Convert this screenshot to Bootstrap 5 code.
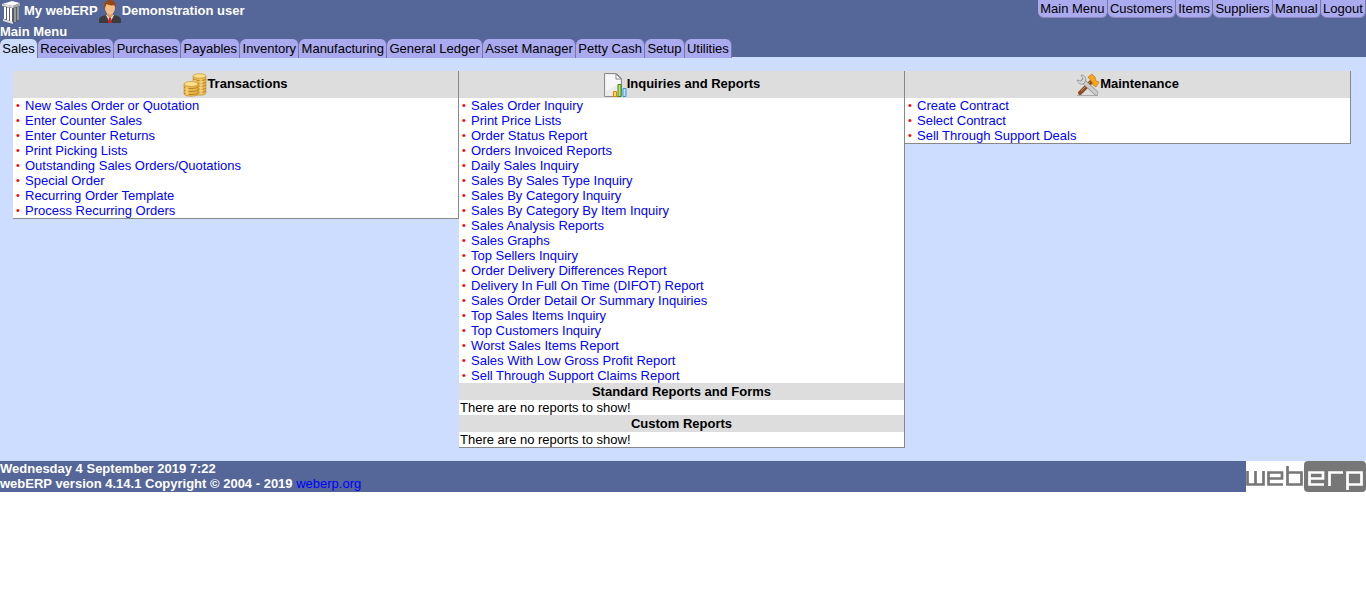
<!DOCTYPE html>
<html lang="en">
<head>
<meta charset="utf-8">
<meta name="viewport" content="width=device-width, initial-scale=1">
<title>webERP - Main Menu</title>
<link href="https://cdn.jsdelivr.net/npm/bootstrap@5.3.0/dist/css/bootstrap.min.css" rel="stylesheet">
<style>
body{font-family:"Liberation Sans",Arial,sans-serif;font-size:13px;line-height:15px;color:#000;background:#fff}
a{color:#00f;text-decoration:none}
a:hover{text-decoration:underline}
.erp-bar{background:#569;color:#fff}
.erp-user{height:24px}
.erp-user span{line-height:22px}
.erp-link,.erp-tab{background:#aae;color:#000;white-space:nowrap;text-align:center;padding:0 2px;border-right:1px solid #77a}
.erp-link{height:18px;line-height:18px;border-bottom:1px solid #88b;border-radius:0 0 6px 6px}
.erp-tab{height:19px;line-height:19px;border-radius:6px 6px 0 0}
.erp-tab.active{background:#cdf}
.erp-quick{width:328px}
.erp-tabs{max-width:732px;margin-bottom:-1px}
.erp-main{background:#cdf;padding:14px 15px 13px 13px}
.erp-panel{background:#fff;border-right:1px solid #888;border-bottom:1px solid #888}
.erp-panel h2{font-size:13px;line-height:17px;font-weight:700;background:#ddd;margin:0;text-align:center}
.erp-panel h2.erp-head{height:27px;line-height:25px}
.erp-head svg{margin-top:2px}
.erp-panel li{display:flex}
.erp-panel li::before{content:"•";color:red;font-size:11px;width:9px}
.erp-panel ul{padding-left:3px}
.erp-panel p{padding-left:1px}
.erp-logo{background:#fff}
</style>
</head>
<body>
<header class="erp-bar">
  <div class="d-flex justify-content-between align-items-start">
    <div class="erp-user d-flex align-items-start fw-bold">
      <svg width="24" height="24" viewBox="0 0 24 24" aria-hidden="true"><path d="M2 4 12 1l8 2v3l-1 1v14l-6 2-9-3V7L2 6z" fill="#555d68"/><path d="M2 4 12 1l8 2-7 3z" fill="#f8f8f8"/><path d="M2 4 13 6v2L2 6z" fill="#ddd"/><path d="M13 6 20 3v3l-7 2z" fill="#aaa"/><path d="M5 7v12M8 7.500v13M11 8v14" stroke="#fff" stroke-width="2"/><path d="M15 8v14M18 7v13" stroke="#aaa" stroke-width="1.500"/><path d="m3 19 10 3v2L3 21z" fill="#ddd"/></svg>
      <span>My webERP</span>
      <svg width="24" height="24" viewBox="0 0 24 24" aria-hidden="true"><path d="M1 23v-3c0-3 3-4 7-5h8c4 1 7 2 7 5v3z" fill="#3c3c3c"/><path d="m8 15 4 8 4-8z" fill="#eee"/><path d="m11 17h2l1 6h-4z" fill="#c22"/><path d="M9 12h6v4l-3 2-3-2z" fill="#dc9a63"/><ellipse cx="12" cy="8" rx="5" ry="6.500" fill="#f3bd85"/><path d="M6.500 9C5 3 8 0 12 0s7 3 5.500 9l-1-4c-3 1-6 0-8-1z" fill="#974512"/></svg>
      <span>Demonstration user</span>
    </div>
    <nav class="erp-quick d-flex" aria-label="Quick menu">
      <a class="erp-link flex-fill" href="#">Main Menu</a><a class="erp-link flex-fill" href="#">Customers</a><a class="erp-link flex-fill" href="#">Items</a><a class="erp-link flex-fill" href="#">Suppliers</a><a class="erp-link flex-fill" href="#">Manual</a><a class="erp-link flex-fill" href="#">Logout</a>
    </nav>
  </div>
  <div class="fw-bold">Main Menu</div>
  <nav class="erp-tabs d-flex position-relative" aria-label="Modules">
    <a class="erp-tab flex-fill active" href="#">Sales</a><a class="erp-tab flex-fill" href="#">Receivables</a><a class="erp-tab flex-fill" href="#">Purchases</a><a class="erp-tab flex-fill" href="#">Payables</a><a class="erp-tab flex-fill" href="#">Inventory</a><a class="erp-tab flex-fill" href="#">Manufacturing</a><a class="erp-tab flex-fill" href="#">General Ledger</a><a class="erp-tab flex-fill" href="#">Asset Manager</a><a class="erp-tab flex-fill" href="#">Petty Cash</a><a class="erp-tab flex-fill" href="#">Setup</a><a class="erp-tab flex-fill" href="#">Utilities</a>
  </nav>
</header>
<main class="erp-main">
  <div class="row g-0 align-items-start">
    <section class="col-4 erp-panel">
      <h2 class="erp-head d-flex align-items-start justify-content-center"><svg width="24" height="24" viewBox="0 0 24 24" aria-hidden="true"><g fill="#e8b74b" stroke="#b9852c" stroke-width=".5"><path d="M10 3v17c0 3 13 3 13 0V3z"/><path d="M1 11v10c0 3 14 3 14 0V11z"/></g><g fill="none" stroke="#a87520" stroke-width=".8"><path d="M10 6c1 2 12 2 13 0M10 9c1 2 12 2 13 0M15 13c3 1 7 0 8-1M15 16c3 1 7 0 8-1M15 19c3 1 7 0 8-1M1 14c2 2 12 2 14 0M1 17c2 2 12 2 14 0M1 20c2 2 12 2 14 0"/></g><path d="M12 7v3M4 14v8M18 6v15" stroke="#ffe393" stroke-width="3" opacity=".6"/><ellipse cx="16.500" cy="3" rx="6.500" ry="2.200" fill="#fbe08b" stroke="#c59235" stroke-width=".7"/><ellipse cx="8" cy="11" rx="7" ry="2.500" fill="#fbe08b" stroke="#c59235" stroke-width=".7"/></svg>Transactions</h2>
      <ul class="list-unstyled mb-0">
        <li><a href="#">New Sales Order or Quotation</a></li>
        <li><a href="#">Enter Counter Sales</a></li>
        <li><a href="#">Enter Counter Returns</a></li>
        <li><a href="#">Print Picking Lists</a></li>
        <li><a href="#">Outstanding Sales Orders/Quotations</a></li>
        <li><a href="#">Special Order</a></li>
        <li><a href="#">Recurring Order Template</a></li>
        <li><a href="#">Process Recurring Orders</a></li>
      </ul>
    </section>
    <section class="col-4 erp-panel">
      <h2 class="erp-head d-flex align-items-start justify-content-center"><svg width="24" height="24" viewBox="0 0 24 24" aria-hidden="true"><path d="M1.500.5h12l5 5v18h-17z" fill="#ececef" stroke="#8c8c90"/><path d="M3 2h9v5h5v4L3 18z" fill="#fff" opacity=".6"/><path d="M13 1v5h5z" fill="#fff" stroke="#8c8c90"/><path d="M10.500 18.500h3v5h-3z" fill="#ffd35a" stroke="#e88100"/><path d="M15 11.500h3v12h-3z" fill="#b4e37a" stroke="#3c8a05"/><path d="M20 15.500h3v8h-3z" fill="#b8e0ff" stroke="#3b93dc"/></svg>Inquiries and Reports</h2>
      <ul class="list-unstyled mb-0">
        <li><a href="#">Sales Order Inquiry</a></li>
        <li><a href="#">Print Price Lists</a></li>
        <li><a href="#">Order Status Report</a></li>
        <li><a href="#">Orders Invoiced Reports</a></li>
        <li><a href="#">Daily Sales Inquiry</a></li>
        <li><a href="#">Sales By Sales Type Inquiry</a></li>
        <li><a href="#">Sales By Category Inquiry</a></li>
        <li><a href="#">Sales By Category By Item Inquiry</a></li>
        <li><a href="#">Sales Analysis Reports</a></li>
        <li><a href="#">Sales Graphs</a></li>
        <li><a href="#">Top Sellers Inquiry</a></li>
        <li><a href="#">Order Delivery Differences Report</a></li>
        <li><a href="#">Delivery In Full On Time (DIFOT) Report</a></li>
        <li><a href="#">Sales Order Detail Or Summary Inquiries</a></li>
        <li><a href="#">Top Sales Items Inquiry</a></li>
        <li><a href="#">Top Customers Inquiry</a></li>
        <li><a href="#">Worst Sales Items Report</a></li>
        <li><a href="#">Sales With Low Gross Profit Report</a></li>
        <li><a href="#">Sell Through Support Claims Report</a></li>
      </ul>
      <h2>Standard Reports and Forms</h2>
      <p class="mb-0">There are no reports to show!</p>
      <h2>Custom Reports</h2>
      <p class="mb-0">There are no reports to show!</p>
    </section>
    <section class="col-4 erp-panel">
      <h2 class="erp-head d-flex align-items-start justify-content-center"><svg width="24" height="24" viewBox="0 0 24 24" aria-hidden="true"><path d="M1 22.500h21" stroke="#aaa"/><path d="m4 20 12-12" stroke="#8a4e25" stroke-width="4" stroke-linecap="round"/><path d="m5 18 9-9" stroke="#c4895a"/><path d="m12 4 4-3 3 3 1 4 3 1-3 5-3-2-1-3z" fill="#f5a51e" stroke="#cf7a05" stroke-width=".7"/><path d="m7 8 13 12" stroke="#888" stroke-width="4.500" stroke-linecap="round"/><path d="m7 8 13 12" stroke="#ccc" stroke-width="3.500" stroke-linecap="round"/><path d="M5 2C9 2 11 5 9 9S2 11 1 7l4 1 2-2z" fill="#d5d5d5" stroke="#888" stroke-width=".7"/></svg>Maintenance</h2>
      <ul class="list-unstyled mb-0">
        <li><a href="#">Create Contract</a></li>
        <li><a href="#">Select Contract</a></li>
        <li><a href="#">Sell Through Support Deals</a></li>
      </ul>
    </section>
  </div>
</main>
<footer class="erp-bar d-flex justify-content-between fw-bold">
  <div>Wednesday 4 September 2019 7:22<br>webERP version 4.14.1 Copyright © 2004 - 2019 <a class="fw-normal" href="#">weberp.org</a></div>
  <svg class="erp-logo" width="120" height="31" viewBox="0 0 120 31" role="img" aria-label="webERP"><rect x="58" width="62" height="31" rx="4" fill="#777"/><g fill="none" stroke="#777" stroke-width="2.700"><path d="M1.500 10v13.500h16V10M9.500 10v13.500M37 23.500H22.500v-12H36v6H22.500M41.500 5v18.500h14v-12h-14"/></g><g fill="none" stroke="#fff" stroke-width="2.700"><path d="M78 23.500H63.500v-12H77v6H63.500M83.500 25V11.500H97M101.500 29V11.500h14v12h-14"/></g></svg>
</footer>
<script src="https://cdn.jsdelivr.net/npm/bootstrap@5.3.0/dist/js/bootstrap.bundle.min.js"></script>
</body>
</html>
